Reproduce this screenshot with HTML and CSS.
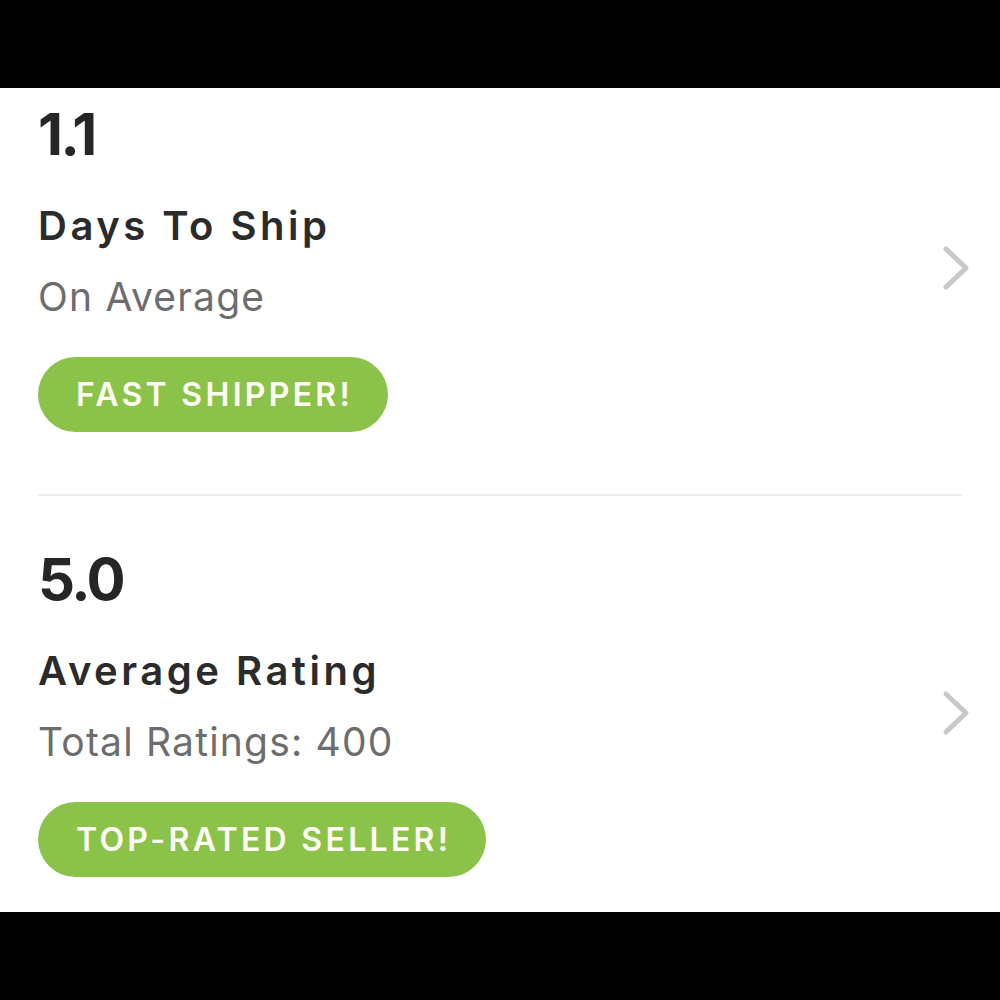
FILE: index.html
```html
<!DOCTYPE html>
<html>
<head>
<meta charset="utf-8">
<link rel="stylesheet" href="styles.css">
</head>
<body>
<div class="bar-top"></div>
<main class="panel">
  <section class="stat">
    <div class="stat-body">
      <div class="value">1.1</div>
      <div class="title">Days To Ship</div>
      <div class="sub">On Average</div>
      <div class="pill">FAST SHIPPER!</div>
    </div>
    <svg class="chev" width="30" height="48" viewBox="0 0 30 48"><polyline points="5,5 25,24 5,43" fill="none" stroke="#c8c8cc" stroke-width="5" stroke-linecap="round" stroke-linejoin="round"/></svg>
  </section>
  <div class="divider"></div>
  <section class="stat second">
    <div class="stat-body">
      <div class="value">5.0</div>
      <div class="title">Average Rating</div>
      <div class="sub">Total Ratings: 400</div>
      <div class="pill">TOP-RATED SELLER!</div>
    </div>
    <svg class="chev" width="30" height="48" viewBox="0 0 30 48"><polyline points="5,5 25,24 5,43" fill="none" stroke="#c8c8cc" stroke-width="5" stroke-linecap="round" stroke-linejoin="round"/></svg>
  </section>
</main>
<div class="bar-bottom"></div>
</body>
</html>
```

FILE: styles.css
```css
html, body {
  margin: 0;
  padding: 0;
  background: #000;
}
body {
  width: 1000px;
  height: 1000px;
  display: flex;
  flex-direction: column;
  font-family: Inter, "Open Sans", sans-serif;
}
.bar-top {
  height: 88px;
  background: #000;
}
.bar-bottom {
  flex: 1;
  background: #000;
}
.panel {
  height: 824px;
  background: #fff;
  padding: 16px 0 0 38px;
  box-sizing: border-box;
  display: flex;
  flex-direction: column;
}
.stat {
  display: flex;
  align-items: center;
  justify-content: space-between;
  padding-right: 29px;
}
.stat-body {
  display: flex;
  flex-direction: column;
  align-items: flex-start;
}
.value {
  font-size: 58px;
  line-height: 60px;
  font-weight: 700;
  color: #262626;
  letter-spacing: -2.5px;
}
.title {
  margin-top: 42px;
  font-size: 40px;
  line-height: 40px;
  font-weight: 600;
  color: #2b2b2b;
  letter-spacing: 3.5px;
}
.sub {
  margin-top: 31px;
  font-size: 39px;
  line-height: 40px;
  font-weight: 400;
  color: #6d6d6d;
  letter-spacing: 1.2px;
}
.pill {
  margin-top: 40px;
  height: 75px;
  padding: 0 35px 0 38px;
  border-radius: 38px;
  background: #8bc34a;
  color: #fffef4;
  font-size: 32px;
  font-weight: 600;
  letter-spacing: 3.3px;
  display: flex;
  align-items: center;
}
.divider {
  margin: 62px 38px 0 0;
  height: 2px;
  background: #eeeded;
}
.second {
  margin-top: 53px;
}
```
